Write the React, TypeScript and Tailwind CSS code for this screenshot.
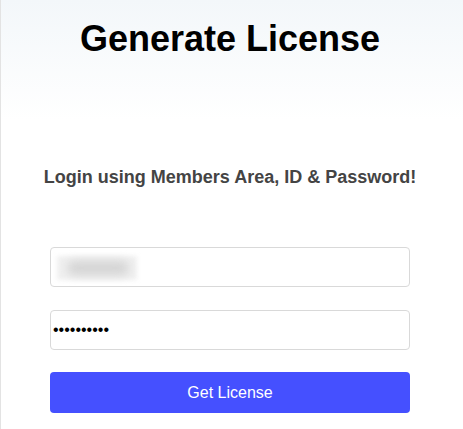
import React from "react";

export default function App() {
  return (
    <div
      className="w-[463px] h-[429px] border-l border-[#e3e3e3] bg-gradient-to-b from-[#f3f7fa] to-white to-[28%] overflow-hidden"
      style={{ fontFamily: '"Liberation Sans", Arial, sans-serif' }}
    >
      <div className="flex flex-col items-center pr-[4px]">
        <h1 className="pt-[18px] text-[36px] leading-[41px] font-bold text-black">
          Generate License
        </h1>
        <p className="mt-[108px] text-[18px] leading-[21px] font-bold text-[#444]">
          Login using Members Area, ID &amp; Password!
        </p>
        <div className="mt-[59px] w-[360px] flex flex-col">
          <div className="relative h-[40px] overflow-hidden rounded-[4px] border border-[#d9d9d9] bg-white">
            <div className="absolute left-[6px] top-[8px] h-[24px] w-[80px] bg-[#f0f0f0] blur-[2px]" />
            <div className="absolute left-[16px] top-[13px] h-[14px] w-[62px] rounded-full bg-[#d4d4d4] blur-[5px]" />
          </div>
          <input
            type="password"
            readOnly
            defaultValue="aaaaaaaaaa"
            className="mt-[23px] h-[40px] w-full rounded-[4px] border border-[#d9d9d9] bg-white px-[2px] text-[16px] text-black outline-none"
          />
          <button className="mt-[22px] h-[41px] w-full rounded-[4px] bg-[#4550ff] text-[16px] text-white">
            Get License
          </button>
        </div>
      </div>
    </div>
  );
}
